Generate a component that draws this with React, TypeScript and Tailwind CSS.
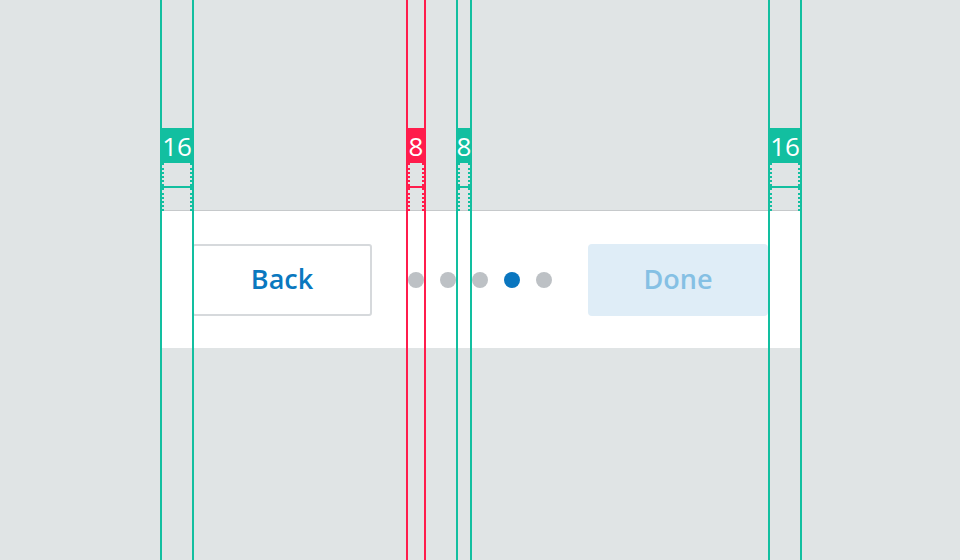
type GuideProps = {
  left: number;
  width: number;
  label: string;
  red?: boolean;
};

function Guide({ left, width, label, red }: GuideProps) {
  const line = red ? "border-[#ff1c4c]" : "border-[#12bfa0]";
  const fill = red ? "bg-[#ff1c4c]" : "bg-[#12bfa0]";
  return (
    <div
      className={`pointer-events-none absolute top-0 h-full border-x-2 ${line}`}
      style={{ left, width }}
    >
      <div
        className={`absolute -inset-x-[2px] top-[128px] flex h-[35px] items-center justify-center text-[26px] font-normal leading-none text-white ${fill}`}
      >
        {label}
      </div>
      <div className="absolute inset-x-0 top-[163px] flex h-[48px] flex-col">
        <div className={`h-[23px] border-x-2 border-dotted ${line}`} />
        <div className={`h-[2px] ${fill}`} />
        <div className={`h-[23px] border-x-2 border-dotted ${line}`} />
      </div>
    </div>
  );
}

export default function App() {
  const dots = [false, false, false, true, false];
  return (
    <div
      className="relative h-[560px] w-[960px] overflow-hidden bg-[#e0e4e5]"
      style={{ fontFamily: "'Open Sans', 'Noto Sans', sans-serif" }}
    >
      <div className="ml-[160px] mt-[210px] flex h-[138px] w-[640px] items-center justify-between border-t border-[#c6c9cb] bg-white px-8">
        <button className="flex h-[72px] w-[180px] items-center justify-center rounded-[3px] border-2 border-[#d6d9dc] bg-white text-[27px] font-semibold text-[#0a78bf]">
          Back
        </button>
        <div className="flex items-center gap-4">
          {dots.map((active, i) => (
            <span
              key={i}
              className={`h-4 w-4 rounded-full ${active ? "bg-[#0a76bf]" : "bg-[#bdc1c5]"}`}
            />
          ))}
        </div>
        <button className="flex h-[72px] w-[180px] items-center justify-center rounded-[4px] bg-[#dfedf7] text-[27px] font-semibold text-[#85c0e4]">
          Done
        </button>
      </div>

      <Guide left={160} width={34} label="16" />
      <Guide left={406} width={20} label="8" red />
      <Guide left={456} width={16} label="8" />
      <Guide left={768} width={34} label="16" />
    </div>
  );
}
